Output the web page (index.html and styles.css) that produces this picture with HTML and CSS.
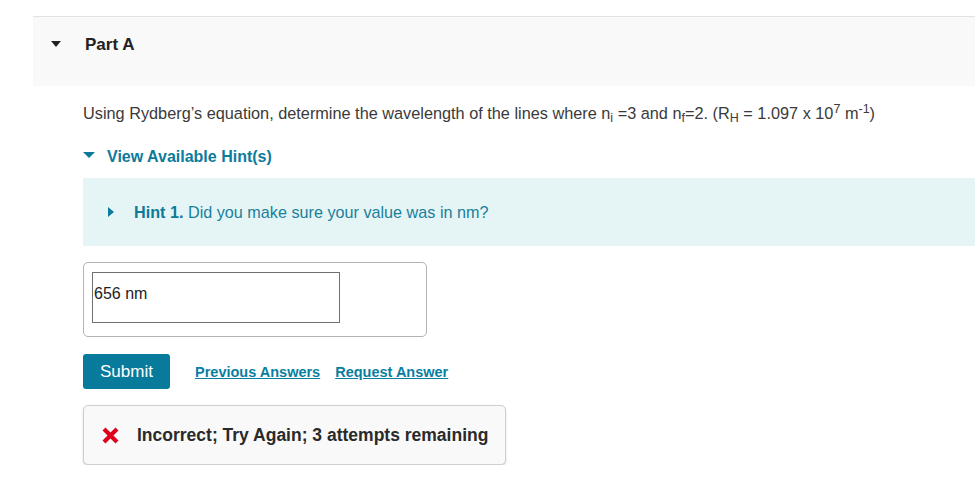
FILE: index.html
```html
<!DOCTYPE html>
<html>
<head>
<meta charset="utf-8">
<link rel="stylesheet" href="styles.css">
</head>
<body>
<div class="page">
  <div class="part-header">
    <span class="caret-down dark"></span>
    <span class="part-title">Part A</span>
  </div>
  <div class="content">
    <p class="question">Using Rydberg’s equation, determine the wavelength of the lines where n<sub>i</sub> =3 and n<sub>f</sub>=2. (R<sub>H</sub> = 1.097 x 10<sup>7</sup> m<sup>-1</sup>)</p>
    <div class="hint-toggle">
      <span class="caret-down teal"></span>
      <span class="hint-toggle-text">View Available Hint(s)</span>
    </div>
    <div class="hint-box">
      <span class="caret-right"></span>
      <span class="hint-text"><b>Hint 1.</b> Did you make sure your value was in nm?</span>
    </div>
    <div class="answer-box">
      <div class="answer-input">656 nm</div>
    </div>
    <div class="actions">
      <button class="submit">Submit</button>
      <a class="link" href="#">Previous Answers</a>
      <a class="link" href="#">Request Answer</a>
    </div>
    <div class="feedback">
      <svg class="x-icon" width="19" height="17" viewBox="0 0 19 17"><path d="M3 2 L16 15 M16 2 L3 15" stroke="#e0001b" stroke-width="4.2" stroke-linecap="butt"/></svg>
      <span class="feedback-text">Incorrect; Try Again; 3 attempts remaining</span>
    </div>
  </div>
</div>
</body>
</html>
```

FILE: styles.css
```css
html, body {
  margin: 0;
  padding: 0;
  background: #ffffff;
  font-family: "Liberation Sans", Arial, sans-serif;
}
.page {
  padding-top: 16px;
  padding-left: 33px;
}
.part-header {
  border-top: 1px solid #e2e2e2;
  background: #f9f9f9;
  height: 69px;
  display: flex;
  align-items: flex-start;
}
.caret-down {
  width: 0;
  height: 0;
  border-left: 5.5px solid transparent;
  border-right: 5.5px solid transparent;
  border-top: 6px solid #222;
}
.caret-down.dark {
  margin-left: 18px;
  margin-top: 24px;
}
.part-title {
  margin-left: 24px;
  margin-top: 18px;
  font-size: 17px;
  line-height: 20px;
  font-weight: bold;
  color: #222;
}
.content {
  padding-left: 50px;
}
.question {
  margin: 17px 0 0 0;
  font-size: 16.3px;
  line-height: 21px;
  color: #3a3a3a;
}
.question sub, .question sup {
  font-size: 12.5px;
  line-height: 0;
}
.question sup {
  vertical-align: 6px;
}
.question sub {
  vertical-align: -3px;
}
.hint-toggle {
  margin-top: 23px;
  display: flex;
  align-items: center;
  height: 20px;
}
.caret-down.teal {
  border-top-color: #0d7a9a;
  border-left-width: 6px;
  border-right-width: 6px;
  border-top-width: 6px;
  margin-top: -4px;
}
.hint-toggle-text {
  margin-left: 12px;
  font-size: 16px;
  font-weight: bold;
  color: #0d7a9a;
}
.hint-box {
  margin-top: 11px;
  background: #e5f5f6;
  height: 68px;
  display: flex;
  align-items: center;
}
.caret-right {
  width: 0;
  height: 0;
  border-top: 5px solid transparent;
  border-bottom: 5px solid transparent;
  border-left: 6px solid #0d7a9a;
  margin-left: 25px;
}
.hint-text {
  margin-left: 20px;
  font-size: 16.2px;
  color: #1a7f9c;
}
.hint-text b {
  color: #0d7a9a;
}
.answer-box {
  margin-top: 16px;
  width: 342px;
  height: 73px;
  border: 1px solid #b3b3b3;
  border-radius: 5px;
}
.answer-input {
  margin: 9px 0 0 8px;
  width: 245px;
  height: 38px;
  border: 1px solid #707070;
  font-size: 16px;
  line-height: 20px;
  color: #222;
  padding-left: 1px;
  padding-top: 11px;
}
.actions {
  margin-top: 17px;
  display: flex;
  align-items: center;
}
.submit {
  width: 87px;
  height: 35px;
  background: #087b9c;
  color: #ffffff;
  border: none;
  border-radius: 3px;
  font-family: "Liberation Sans", Arial, sans-serif;
  font-size: 17px;
  padding: 0;
  margin-right: 25px;
}
.link {
  font-size: 14.5px;
  font-weight: bold;
  color: #0a7ea0;
  text-decoration: underline;
  margin-right: 15px;
}
.feedback {
  margin-top: 16px;
  width: 421px;
  height: 58px;
  background: #f9f9f9;
  border: 1px solid #cfcfcf;
  border-radius: 5px;
  box-shadow: 0 1px 2px rgba(0,0,0,0.18);
  display: flex;
  align-items: center;
}
.x-icon {
  margin-left: 17px;
}
.feedback-text {
  margin-left: 17px;
  font-size: 17.5px;
  font-weight: bold;
  color: #2a2a2a;
}
```
